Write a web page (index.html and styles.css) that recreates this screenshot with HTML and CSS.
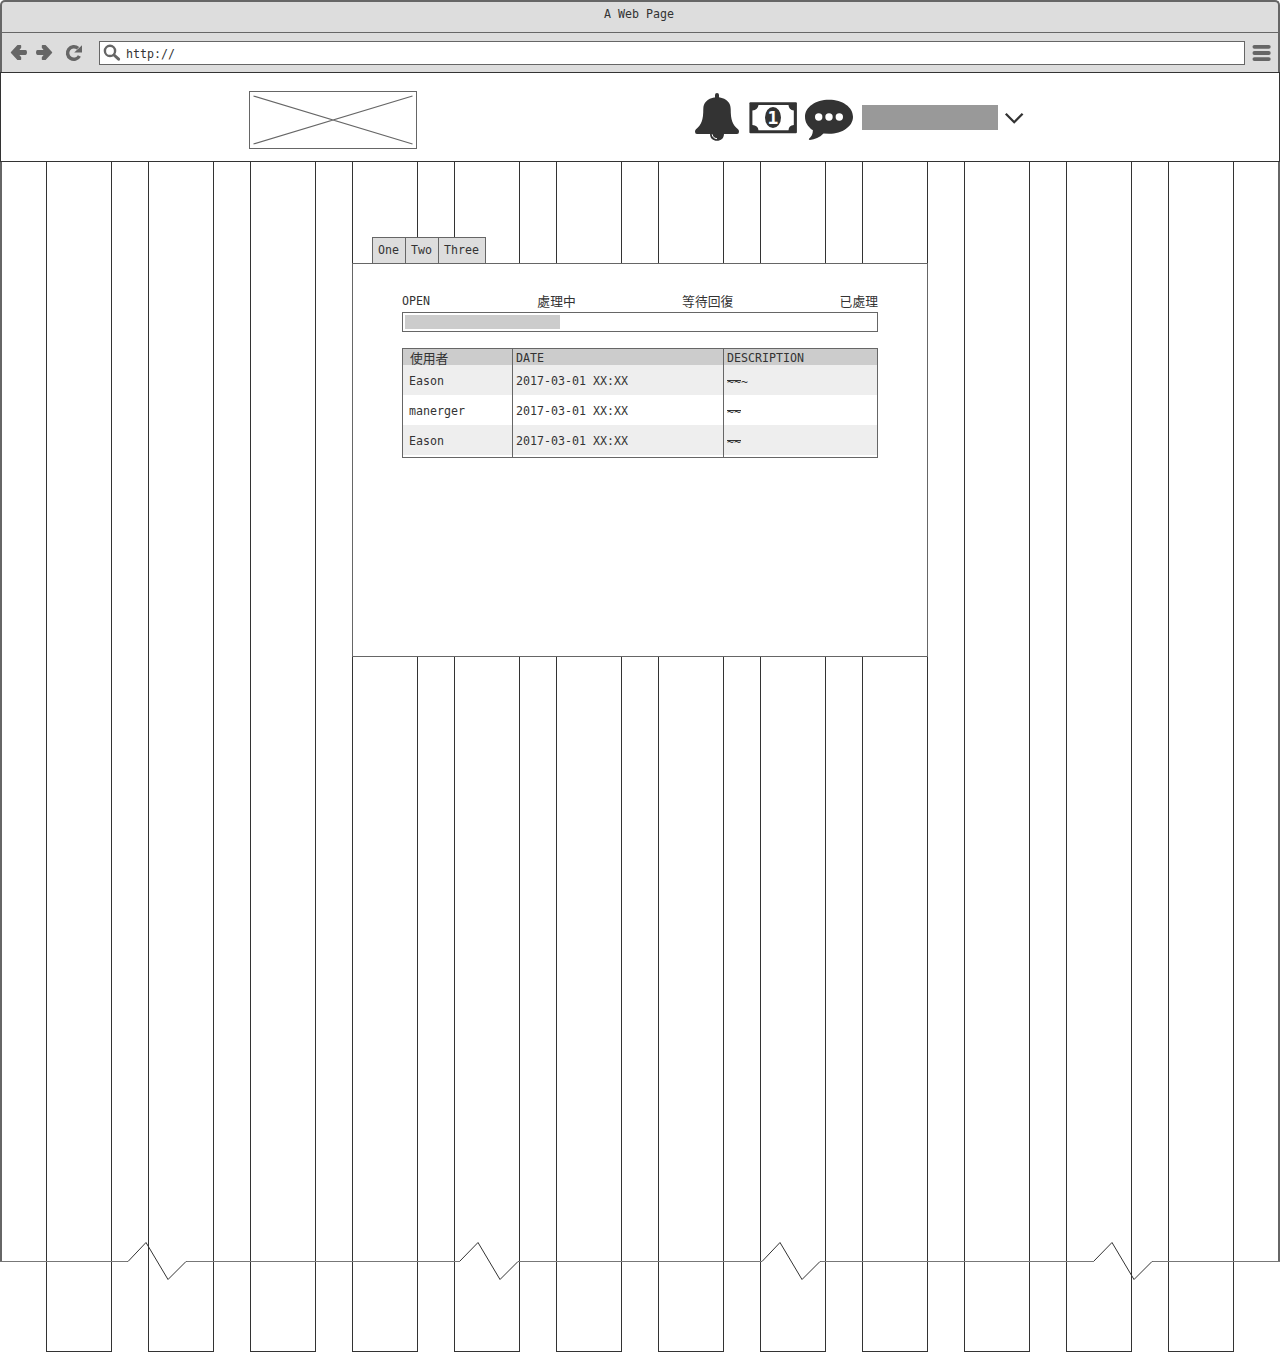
FILE: index.html
```html
<!DOCTYPE html>
<html lang="zh-Hant">
<head>
<meta charset="utf-8">
<title>A Web Page</title>
<link rel="stylesheet" href="styles.css">
</head>
<body>
<div class="stage">
  <div class="guides">
    <i></i><i></i><i></i><i></i><i></i><i></i><i></i><i></i><i></i><i></i><i></i><i></i>
  </div>
  <div class="window">
    <div class="chrome">
      <div class="titlebar">A Web Page</div>
      <div class="toolbar">
        <svg class="nav" width="90" height="38" viewBox="2 33 90 38" fill="#666" stroke="#666" stroke-linejoin="round" stroke-width="1.400">
          <path d="M11.500 52.500L17.700 45.800H20.500V47.500L17.800 50.800H25.500Q26.300 50.800 26.300 52.500T25.500 54.200H17.800L20.500 57.500V59.300H17.700Z"/>
          <path d="M51.500 52.500L45.300 45.800H42.500V47.500L45.200 50.800H37.500Q36.700 50.800 36.700 52.500T37.500 54.200H45.200L42.500 57.500V59.300H45.300Z"/>
          <path d="M79.400 56A6.300 6.300 0 1 1 78 48.200" fill="none" stroke-width="3.500"/>
          <path d="M82 45.300V52.600H74.200Z" stroke="none"/>
        </svg>
        <div class="address">
          <svg width="18" height="18" viewBox="103 44 18 18" fill="none" stroke="#666">
            <circle cx="110" cy="50.900" r="5.100" stroke-width="2.400"/>
            <path d="M114 55L118.600 59.200" stroke-width="3" stroke-linecap="round"/>
          </svg>
          <span>http://</span>
        </div>
        <svg class="menu" width="20" height="20" viewBox="1252 43 20 20" stroke="#666" stroke-width="3.800" stroke-linecap="round">
          <path d="M1254.400 46.800H1268.800M1254.400 53H1268.800M1254.400 59.100H1268.800"/>
        </svg>
      </div>
    </div>
    <header class="site-header">
      <svg class="logo" width="168" height="58" viewBox="0 0 168 58" fill="none" stroke="#666">
        <rect x=".5" y=".5" width="167" height="57"/>
        <path d="M4.500 5L163.500 53M4.500 53L163.500 5" stroke-width="1.200"/>
      </svg>
      <div class="tools">
        <svg width="46" height="50" viewBox="694 93 46 50">
          <path fill="#333" d="M715 98V95Q715 93 717 93T719 95V97.200C727 98.500 730.700 103 730.700 109C730.700 120 732.500 124.500 738 129.300Q739 130.200 739 131.700Q739 134 737 134H724C723.800 138.500 721 140.800 717 140.800S710.200 138.500 710 134H697Q695 134 695 131.700Q695 130.200 696 129.300C701.500 124.500 703.300 120 703.300 109C703.300 103 707 98.500 715 97.200Z"/>
          <path d="M712.200 134.300Q712.600 138.200 717 138.700" fill="none" stroke="#fff" stroke-width="1"/>
        </svg>
        <svg width="48" height="32" viewBox="749 102 48 32">
          <rect x="749.400" y="102.200" width="47.500" height="31" rx="1" fill="#333"/>
          <path fill="#fff" d="M758.500 105H788.500Q788.800 109.800 793.800 110.500V125Q788.800 125.500 788.500 130.200H758.500Q758 125.500 752.400 125V110.500Q758 109.800 758.500 105Z"/>
          <ellipse cx="773" cy="117.500" rx="8" ry="10.500" fill="#333"/>
          <text class="bill" x="773" y="124" text-anchor="middle">1</text>
        </svg>
        <svg width="50" height="42" viewBox="804 97 50 42" overflow="visible">
          <path fill="#333" d="M829 99.800C842.500 99.800 853 107.200 853 116.700S842.500 133.700 829 133.700L823.500 133.400C819.500 137.500 815 139.300 809.800 140Q808.300 139.800 809 138.800C811.500 136.500 812.800 134.500 812.900 130.300C807.500 126.500 805 122 805 116.700C805 107.200 815.500 99.800 829 99.800Z"/>
          <g fill="#fff"><circle cx="818.700" cy="117" r="3.700"/><circle cx="829" cy="117" r="3.700"/><circle cx="839.300" cy="117" r="3.700"/></g>
        </svg>
        <div class="account"></div>
        <svg width="20" height="14" viewBox="1004 111 20 14">
          <path d="M1005.800 113.800L1014.200 122.200L1022.600 113.800" fill="none" stroke="#333" stroke-width="2.300"/>
        </svg>
      </div>
    </header>
    <main class="viewport">
      <nav class="tabs"><span>One</span><span>Two</span><span>Three</span></nav>
      <section class="panel">
        <div class="steps"><span>OPEN</span><span class="zh">處理中</span><span class="zh">等待回復</span><span class="zh">已處理</span></div>
        <div class="progress"><div class="bar"></div></div>
        <div class="table">
          <div class="row head"><span class="zh">使用者</span><span>DATE</span><span>DESCRIPTION</span></div>
          <div class="row shade"><span>Eason</span><span>2017-03-01 XX:XX</span><span class="desc"><b>~~</b>~</span></div>
          <div class="row"><span>manerger</span><span>2017-03-01 XX:XX</span><span class="desc"><b>~~</b></span></div>
          <div class="row shade"><span>Eason</span><span>2017-03-01 XX:XX</span><span class="desc"><b>~~</b></span></div>
          <div class="row rest"><span></span><span></span><span></span></div>
        </div>
      </section>
    </main>
    <svg class="break" width="1280" height="21" viewBox="0 1241 1280 21" fill="none">
      <path stroke="#777" d="M0 1261.500H128M186 1261.500H459.500M518 1261.500H762M820 1261.500H1093.500M1152 1261.500H1280"/>
      <path stroke="#333" d="M128 1261.500L146 1242.500L168 1279.500L186 1261.500M459.500 1261.500L478 1242.500L500 1279.500L518 1261.500M762 1261.500L780 1242.500L802 1279.500L820 1261.500M1093.500 1261.500L1112 1242.500L1134 1279.500L1152 1261.500"/>
    </svg>
  </div>
</div>
</body>
</html>
```
FILE: styles.css
```css
* { box-sizing: border-box; }
body {
  margin: 0;
  background: #fff;
  color: #333;
  font: 11.63px/16px "DejaVu Sans Mono", "Noto Sans CJK TC", monospace;
}
svg { display: block; flex: none; }
.zh { font-family: "Noto Sans CJK TC", sans-serif; font-size: 12.8px; }

/* guides and window share one cell */
.stage { display: grid; grid-template: 1352px / 1280px; overflow: hidden; }
.guides, .window { grid-area: 1 / 1; }
.guides {
  display: grid;
  grid-template-columns: repeat(12, 66px);
  column-gap: 36px;
  padding: 161px 46px 0;
}
.guides i { border: 1px solid #333; }
.window { position: relative; display: flex; flex-direction: column; height: 1262px; }

.chrome {
  height: 72px;
  border: 2px solid #666;
  border-bottom: 0;
  border-radius: 5px 5px 0 0;
  background: #ddd;
}
.titlebar {
  height: 31px;
  padding: 4px 2px 0 0;
  border-bottom: 1px solid #666;
  text-align: center;
}
.toolbar { display: flex; align-items: flex-start; height: 39px; }
.nav { margin-right: 7px; }
.address {
  display: flex;
  align-items: center;
  gap: 5px;
  width: 1146px;
  height: 24px;
  margin-top: 8px;
  padding-left: 3px;
  border: 1px solid #666;
  background: #fff;
}
.address span { padding-top: 2px; }
.menu { margin: 10px 0 0 7px; }

.site-header {
  display: flex;
  justify-content: space-between;
  height: 90px;
  padding: 18px 255px 0 248px;
  border: 1px solid #333;
  background: #fff;
}
.tools { display: flex; align-items: center; gap: 8px; height: 53px; }
.tools svg:first-child { margin-right: 1px; }
.tools svg:nth-child(2) { margin-right: -1px; }
.account { width: 136px; height: 25px; background: #999; margin-right: -2px; }
.bill { font: bold 18px "DejaVu Sans Mono", monospace; fill: #fff; }

.viewport {
  flex: 1;
  margin-bottom: -21px;
  padding: 75px 350px 0;
  border: solid #666;
  border-width: 0 2px;
}
.tabs { display: flex; width: 114px; margin-left: 20px; border: solid #666; border-width: 1px 1px 0 0; background: #ddd; }
.tabs span { height: 25px; padding: 4px 6px 0 5px; border-left: 1px solid #666; }
.panel {
  height: 394px;
  padding: 28px 49px 0;
  border: 1px solid #666;
  background: #fff;
}
.steps { display: flex; justify-content: space-between; height: 20px; line-height: 18px; }
.steps span:nth-child(2) { padding-left: 1px; }
.progress { height: 20px; padding: 2px; border: 1px solid #666; }
.bar { width: 154.5px; height: 14px; background: #ccc; }

.table { margin-top: 16px; border: 1px solid #666; }
.row {
  display: grid;
  grid-template: 100% / 110px 211px 153px;
  height: 30px;
  line-height: 32px;
  white-space: nowrap;
}
.row span { height: 100%; padding-left: 3px; }
.row span:first-child { padding-left: 6px; }
.row span + span { margin-left: -1px; border-left: 1px solid #666; }
.row.head { height: 16px; line-height: 18px; background: #ccc; }
.row.head .zh { padding-left: 7px; }
.shade { background: #eee; }
.row.rest { height: 2px; }
.row .desc { line-height: 34px; }
.desc b { font-weight: normal; background: linear-gradient(#333, #333) 0 5px / 100% 1px no-repeat; }
.break { position: relative; overflow: visible; }
```
